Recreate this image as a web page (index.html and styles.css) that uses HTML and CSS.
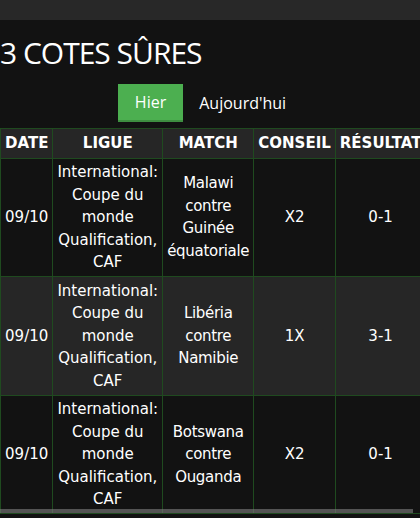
FILE: index.html
```html
<!DOCTYPE html>
<html lang="fr">
<head>
<meta charset="utf-8">
<link rel="stylesheet" href="styles.css">
</head>
<body>
<div class="topbar"></div>
<main class="page">
  <h1 class="title">3 COTES SÛRES</h1>
  <div class="tabs">
    <button class="tab active">Hier</button>
    <button class="tab">Aujourd'hui</button>
  </div>
  <div class="table-wrap">
    <table class="tips">
      <thead>
        <tr><th>DATE</th><th>LIGUE</th><th>MATCH</th><th>CONSEIL</th><th>RÉSULTAT</th></tr>
      </thead>
      <tbody>
        <tr><td>09/10</td><td>International: Coupe du monde Qualification, CAF</td><td class="match">Malawi contre Guinée équatoriale</td><td>X2</td><td>0-1</td></tr>
        <tr class="alt"><td>09/10</td><td>International: Coupe du monde Qualification, CAF</td><td class="match">Libéria contre Namibie</td><td>1X</td><td>3-1</td></tr>
        <tr><td>09/10</td><td>International: Coupe du monde Qualification, CAF</td><td class="match">Botswana contre Ouganda</td><td>X2</td><td>0-1</td></tr>
      </tbody>
    </table>
    <div class="scroll-thumb"></div>
  </div>
</main>
</body>
</html>
```
FILE: styles.css
```css
html, body {
  margin: 0;
  padding: 0;
  background: #121212;
  color: #ffffff;
  overflow: hidden;
}
.topbar {
  height: 20px;
  background: #282828;
}
.page {
  background: #121212;
}
.title {
  margin: 0;
  padding: 14px 0 0 0;
  font-family: "Open Sans", "Noto Sans", sans-serif;
  font-weight: 400;
  font-size: 30px;
  letter-spacing: -1px;
  line-height: 38px;
  color: #fff;
  white-space: nowrap;
}
.tabs {
  display: flex;
  justify-content: center;
  margin-top: 12px;
}
.tab {
  font-family: "Open Sans", "Noto Sans", sans-serif;
  font-size: 16px;
  color: #fff;
  background: transparent;
  border: 0;
  padding: 0 16px;
  height: 38px;
}
.tab.active {
  background: #4caf50;
  border-bottom: 2px solid #3e8e41;
  padding: 0 17px;
}
.table-wrap {
  position: relative;
  margin-top: 6px;
  width: 420px;
  overflow: hidden;
}
.tips {
  border-collapse: collapse;
  font-family: "DejaVu Sans", Verdana, sans-serif;
  font-size: 15px;
  line-height: 22.5px;
  color: #fff;
}
.tips th, .tips td {
  border: 1px solid #1f4a1f;
  padding: 2.5px 4px;
  text-align: center;
}
.tips th {
  background: #262626;
  font-weight: 700;
  white-space: nowrap;
  padding-top: 3px;
  padding-bottom: 3px;
}
.tips td {
  background: #121212;
}
.tips td.match {
  letter-spacing: -0.3px;
}
.tips tr.alt td {
  background: #262626;
}
.scroll-thumb {
  position: absolute;
  left: 0;
  bottom: 1px;
  width: 413px;
  height: 4px;
  background: rgba(128, 128, 128, 0.6);
}
```
